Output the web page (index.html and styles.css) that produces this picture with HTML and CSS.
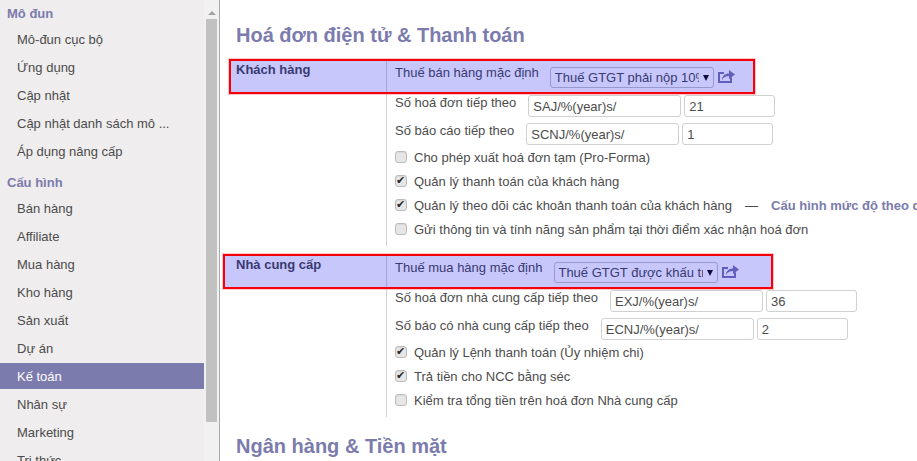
FILE: index.html
```html
<!DOCTYPE html>
<html lang="vi">
<head>
    <meta charset="UTF-8">
    <meta name="viewport" content="width=device-width, initial-scale=1.0">
    <title>Cấu hình Kế toán</title>
    <link rel="stylesheet" href="styles.css">
</head>
<body>
    <div class="app">
        <aside class="sidebar">
            <nav class="menu">
                <h4>Mô đun</h4>
                <a href="#">Mô-đun cục bộ</a>
                <a href="#">Ứng dụng</a>
                <a href="#">Cập nhật</a>
                <a href="#">Cập nhật danh sách mô ...</a>
                <a href="#">Áp dụng nâng cấp</a>
                <h4>Cấu hình</h4>
                <a href="#">Bán hàng</a>
                <a href="#">Affiliate</a>
                <a href="#">Mua hàng</a>
                <a href="#">Kho hàng</a>
                <a href="#">Sản xuất</a>
                <a href="#">Dự án</a>
                <a href="#" class="active">Kế toán</a>
                <a href="#">Nhân sự</a>
                <a href="#">Marketing</a>
                <a href="#">Tri thức</a>
            </nav>
            <div class="scrollbar">
                <span class="scroll-arrow"></span>
                <span class="scroll-thumb"></span>
            </div>
        </aside>

        <main class="content">
            <h2 class="title-first">Hoá đơn điện tử &amp; Thanh toán</h2>

            <section class="group">
                <div class="group-name">Khách hàng</div>
                <div class="group-fields">
                    <div class="row row-first">
                        <label>Thuế bán hàng mặc định</label>
                        <span class="select-wrap">
                            <select><option>Thuế GTGT phải nộp 10%</option></select>
                        </span>
                        <a href="#" class="open-link">
                            <svg viewBox="0 0 17 13" width="17" height="13"><path fill="currentColor" d="M0 2h6v2H2v7h10V8l2-1v6H0z"/><path fill="currentColor" d="M4 10c0-4 3-6.5 7-6.5V0l6 4.5-6 4.5V6c-3 0-5.5 1-7 4z"/></svg>
                        </a>
                    </div>
                    <div class="row row-input">
                        <label>Số hoá đơn tiếp theo</label>
                        <input type="text" class="prefix" value="SAJ/%(year)s/">
                        <input type="text" class="number" value="21">
                    </div>
                    <div class="row row-input row-last">
                        <label>Số báo cáo tiếp theo</label>
                        <input type="text" class="prefix" value="SCNJ/%(year)s/">
                        <input type="text" class="number" value="1">
                    </div>
                    <label class="check"><input type="checkbox">Cho phép xuất hoá đơn tạm (Pro-Forma)</label>
                    <label class="check"><input type="checkbox" checked>Quản lý thanh toán của khách hàng</label>
                    <label class="check"><input type="checkbox" checked>Quản lý theo dõi các khoản thanh toán của khách hàng<span class="dash">—</span><a href="#" class="config-link">Cấu hình mức độ theo dõi</a></label>
                    <label class="check"><input type="checkbox">Gửi thông tin và tính năng sản phẩm tại thời điểm xác nhận hoá đơn</label>
                </div>
                <div class="mark mark-customer"></div>
            </section>

            <section class="group group-vendor">
                <div class="group-name">Nhà cung cấp</div>
                <div class="group-fields">
                    <div class="row row-first">
                        <label>Thuế mua hàng mặc định</label>
                        <span class="select-wrap">
                            <select><option>Thuế GTGT được khấu trừ 10%</option></select>
                        </span>
                        <a href="#" class="open-link">
                            <svg viewBox="0 0 17 13" width="17" height="13"><path fill="currentColor" d="M0 2h6v2H2v7h10V8l2-1v6H0z"/><path fill="currentColor" d="M4 10c0-4 3-6.5 7-6.5V0l6 4.5-6 4.5V6c-3 0-5.5 1-7 4z"/></svg>
                        </a>
                    </div>
                    <div class="row row-input">
                        <label>Số hoá đơn nhà cung cấp tiếp theo</label>
                        <input type="text" class="prefix" value="EXJ/%(year)s/">
                        <input type="text" class="number" value="36">
                    </div>
                    <div class="row row-input row-last">
                        <label>Số báo có nhà cung cấp tiếp theo</label>
                        <input type="text" class="prefix" value="ECNJ/%(year)s/">
                        <input type="text" class="number" value="2">
                    </div>
                    <label class="check"><input type="checkbox" checked>Quản lý Lệnh thanh toán (Ủy nhiệm chi)</label>
                    <label class="check"><input type="checkbox" checked>Trả tiền cho NCC bằng séc</label>
                    <label class="check"><input type="checkbox">Kiểm tra tổng tiền trên hoá đơn Nhà cung cấp</label>
                </div>
                <div class="mark mark-vendor"></div>
            </section>

            <h2 class="title-next">Ngân hàng &amp; Tiền mặt</h2>
        </main>
    </div>
</body>
</html>
```

FILE: styles.css
```css
* {
    margin: 0;
    padding: 0;
    box-sizing: border-box;
}

html, body {
    height: 100%;
    overflow: hidden;
}

body {
    font-family: 'Liberation Sans', Arial, sans-serif;
    font-size: 13px;
    line-height: 15px;
    color: #4c4c4c;
    background: white;
}

a {
    text-decoration: none;
}

.app {
    display: flex;
    height: 100%;
}

/* sidebar */
.sidebar {
    display: flex;
    flex: none;
    width: 220px;
    height: 100%;
    overflow: hidden;
    background: #efeded;
    border-right: 1px solid #a9a9a9;
}

.menu {
    flex: none;
    width: 204px;
}

.menu h4 {
    display: flex;
    align-items: center;
    height: 29px;
    padding: 3px 0 0 7px;
    font-size: 13px;
    font-weight: bold;
    color: #7c7bad;
}

.menu h4:first-child {
    height: 26px;
    padding-top: 0;
}

.menu a {
    display: flex;
    align-items: center;
    height: 26px;
    margin-bottom: 2px;
    padding-left: 17px;
    color: #4c4c4c;
}

.menu a.active {
    background: #7c7bad;
    color: white;
}

.scrollbar {
    display: flex;
    flex-direction: column;
    flex: none;
    align-items: center;
    width: 15px;
    padding: 0 2px 0 2px;
    background: #f1f1f1;
}

.scroll-arrow {
    flex: none;
    width: 0;
    height: 0;
    margin: 11px 0 4px;
    border-left: 4px solid transparent;
    border-right: 4px solid transparent;
    border-bottom: 4px solid #a3a3a3;
}

.scroll-thumb {
    flex: none;
    width: 11px;
    height: 403px;
    background: #c1c1c1;
}

/* content */
.content {
    flex: 1;
    min-width: 0;
    overflow: hidden;
    padding-left: 16px;
    white-space: nowrap;
}

h2 {
    font-size: 20px;
    line-height: 24px;
    font-weight: bold;
    color: #7c7bad;
}

.title-first {
    margin: 23px 0 13px;
}

.title-next {
    margin-top: 17px;
}

.group {
    position: relative;
    display: flex;
}

.group-vendor {
    margin-top: 9px;
}

.group-name {
    flex: none;
    width: 150px;
    padding-top: 2px;
    font-weight: bold;
}

.group-fields {
    flex: 1;
    min-width: 0;
    padding: 0 0 5px 8px;
    border-left: 1px solid #d3d3d3;
}

.row {
    display: flex;
    align-items: flex-start;
}

.row label {
    margin-right: 12px;
}

.group-vendor .row-first label {
    margin-right: 13px;
}

.row-first {
    height: 35px;
    padding-top: 5px;
}

.row-input {
    height: 28px;
}

.row-last {
    height: 22px;
}

input[type="text"] {
    height: 22px;
    padding: 0 4px;
    border: 1px solid #d0d0d0;
    border-radius: 3px;
    font: inherit;
    color: #4c4c4c;
    background: white;
}

.prefix {
    width: 153px;
    margin-right: 3px;
}

.number {
    width: 91px;
}

.select-wrap {
    position: relative;
    display: block;
    width: 164px;
    height: 21px;
    margin: 2px 0 0 -1px;
}

.select-wrap::after {
    content: "";
    position: absolute;
    top: 8px;
    right: 5px;
    border-left: 3.5px solid transparent;
    border-right: 3.5px solid transparent;
    border-top: 6px solid #111111;
}

select {
    display: block;
    width: 100%;
    height: 100%;
    padding: 0 14px 0 4px;
    border: 1px solid #c4c4c4;
    border-radius: 3px;
    font: inherit;
    color: #4c4c4c;
    background: white;
    appearance: none;
    -webkit-appearance: none;
}

.group-vendor select {
    padding-left: 3px;
}

.open-link {
    display: block;
    height: 13px;
    margin: 5px 0 0 4px;
    color: #7c7bad;
}

.check {
    display: flex;
    align-items: center;
    height: 24px;
}

.check input {
    flex: none;
    position: relative;
    width: 12px;
    height: 12px;
    margin-right: 7px;
    border: 1px solid #bbbbbb;
    border-radius: 3px;
    background: #e6e6e6;
    box-shadow: inset 0 1px 1px rgba(0, 0, 0, 0.06);
    appearance: none;
    -webkit-appearance: none;
}

.check input:checked::after {
    content: "✔";
    position: absolute;
    top: 0;
    left: 0;
    font-family: 'DejaVu Sans', sans-serif;
    font-size: 11px;
    line-height: 10px;
    color: #2a2a2a;
}

.dash {
    margin: 0 13px 0 13px;
}

.config-link {
    font-weight: bold;
    color: #7c7bad;
}

/* red annotation boxes drawn over the form */
.mark {
    position: absolute;
    top: -1px;
    height: 35px;
    border: 2px solid #f5000a;
    background: rgba(0, 0, 240, 0.22);
    box-shadow: 0 0 0 1px rgba(255, 0, 0, 0.22);
}

.mark-customer {
    left: -7px;
    width: 526px;
}

.mark-vendor {
    left: -13px;
    width: 550px;
}
```
